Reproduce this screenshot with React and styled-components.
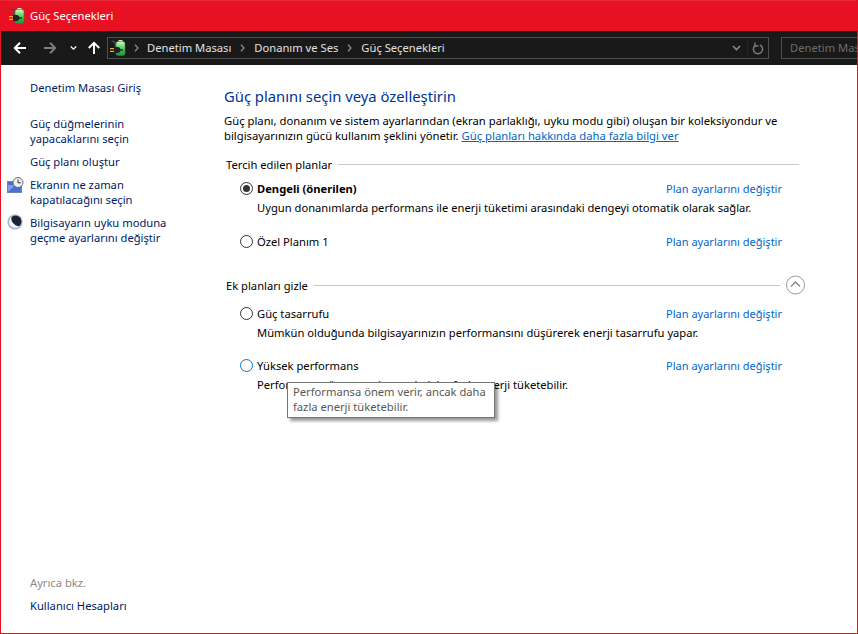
import React from "react";
import styled, { createGlobalStyle } from "styled-components";

const FONT = `"Noto Sans", "Open Sans", "Liberation Sans", sans-serif`;

const Global = createGlobalStyle`
  html, body { margin: 0; padding: 0; background: #fff; }
  body { font-family: ${FONT}; font-size: 11.2px; overflow: hidden; }
  * { box-sizing: border-box; }
`;

const Window = styled.div`
  width: 858px; height: 634px; display: flex; flex-direction: column;
  border-left: 1px solid #e81123; border-bottom: 1px solid #e81123; border-right: 1px solid #e81123;
  background: #fff; position: relative; overflow: hidden;
`;
const TitleBar = styled.div`
  height: 31px; flex: none; background: #e81123; color: #fff; display: flex; align-items: center;
  gap: 5px; padding-left: 8px; border-top: 1px solid #ea2a3a;
`;
const TitleText = styled.span`margin-top: -2px;`;
const Toolbar = styled.div`
  height: 34px; flex: none; background: #191919; display: flex; align-items: center; padding-left: 11px;
`;
const NavBtn = styled.span`
  display: flex; width: ${p => p.$w}px; margin-left: ${p => p.$ml ?? 0}px; justify-content: center; align-items: center; flex: none;
`;
const Address = styled.div`
  width: 662px; height: 22px; border: 1px solid #4f4f4f; display: flex; align-items: center;
  padding-left: 2px; color: #e2e2e2; flex: none;
`;
const Crumb = styled.span`white-space: nowrap; margin-top: -2px;`;
const Sep = styled.span`display: flex; width: ${p => p.$w ?? 23}px; justify-content: center; flex: none;`;
const AddrEnd = styled.div`margin-left: auto; display: flex; height: 100%; align-items: center;`;
const RefreshCell = styled.span`
  width: 21px; height: 100%; border-left: 1px solid #222; display: flex; align-items: center; justify-content: center;
`;
const ChevronCell = styled.span`width: 21px; display: flex; justify-content: center;`;
const Search = styled.div`
  margin-left: 12px; flex: 1; min-width: 0; height: 22px; border: 1px solid #4f4f4f; border-right: none; color: #6d6d6d;
  padding: 0 0 2px 8px; display: flex; align-items: center; overflow: hidden; white-space: nowrap;
`;
const Body = styled.div`flex: 1; display: flex; min-height: 0; color: #000;`;
const Sidebar = styled.nav`
  width: 223px; flex: none; display: flex; flex-direction: column; padding: 15px 0 20px 29px; position: relative;
`;
const SideLink = styled.div`
  line-height: 15px; color: #001a68; margin-bottom: ${p => p.$mb ?? 8}px; white-space: pre-line; position: relative;
`;
const SideIcon = styled.span`position: absolute; left: -24px; top: ${p => p.$top ?? 0}px; display: flex;`;
const SeeAlso = styled.div`margin-top: auto; color: #8a8a8a; line-height: 15px; margin-bottom: 8px;`;
const Content = styled.main`flex: 1; padding-top: 21px; min-width: 0;`;
const Heading = styled.h1`
  margin: 0; font-size: 14.8px; font-weight: 400; color: #003399; line-height: 20px;
`;
const Intro = styled.p`margin: 7px 0 0; line-height: 15px; white-space: nowrap; font-size: 11.27px;`;
const Link = styled.a`color: #0066cc; text-decoration: ${p => p.$u ? "underline" : "none"}; white-space: nowrap;`;
const SectionHead = styled.div`
  display: flex; align-items: center; padding-left: 2px; height: 20px; width: ${p => p.$w}px;
  margin-top: ${p => p.$mt}px; gap: 6px; white-space: nowrap;
`;
const Rule = styled.span`height: 1px; background: #c8c8c8; flex: 1;`;
const Collapse = styled.span`display: flex; flex: none;`;
const Plan = styled.div`margin-top: ${p => p.$mt}px; padding-left: 16px; width: 558px;`;
const PlanRow = styled.div`display: flex; align-items: center; height: 16px;`;
const Radio = styled.span`
  width: 13px; height: 13px; border-radius: 50%; flex: none; border: 1px solid ${p => p.$hover ? "#0078d7" : "#333"};
  display: flex; align-items: center; justify-content: center; background: #fff;
  &::after { content: ""; width: 7px; height: 7px; border-radius: 50%; background: ${p => p.$on ? "#333" : "transparent"}; }
`;
const PlanName = styled.span`margin-left: 4px; font-weight: ${p => p.$b ? 700 : 400}; white-space: nowrap;`;
const PlanLink = styled(Link)`margin-left: auto; font-size: 11px;`;
const PlanDesc = styled.div`margin: 4px 0 0 17px; line-height: 15px; white-space: nowrap;`;
const Tooltip = styled.div`
  position: absolute; left: 286px; top: 382px; width: 208px; height: 36px; background: #fff; border: 1px solid #767676;
  box-shadow: 3px 3px 3px rgba(0,0,0,.4); color: #575757; padding: 1px 5px; line-height: 15px; z-index: 5;
`;

const PowerIcon = ({ id }) => (
  <svg width="16" height="16" viewBox="0 0 16 16">
    <defs>
      <linearGradient id={id} x1="0" y1="0" x2="0" y2="1">
        <stop offset="0" stopColor="#d8f5d0" />
        <stop offset=".3" stopColor="#7fe07a" />
        <stop offset=".65" stopColor="#2fc04a" />
        <stop offset="1" stopColor="#129a35" />
      </linearGradient>
    </defs>
    <path d="M1.5 1.5C3 .8 5 1.5 5.5 4L5.5 8" stroke="#4a4a4a" strokeWidth="1.6" fill="none" />
    <rect x="8.5" y="0" width="4" height="2" fill="#cfe9cc" />
    <rect x="6" y="1.5" width="9" height="14" rx="2" fill={`url(#${id})`} stroke="#3c7a45" strokeWidth=".6" />
    <path d="M4 7H7.5A3.2 3.2 0 0 1 10.5 10A3.2 3.2 0 0 1 7.5 13H4Z" fill="#222" />
    <rect x="0" y="8" width="4" height="1.2" fill="#f0b429" />
    <rect x="0" y="10.8" width="4" height="1.2" fill="#f0b429" />
    <rect x="10" y="9.2" width="3" height="1.6" fill="#333" />
  </svg>
);
const ClockIcon = () => (
  <svg width="18" height="17" viewBox="0 0 18 17">
    <rect x="1.5" y="4.5" width="14" height="11" fill="#4a70d0" stroke="#6e83b5" />
    <path d="M2 15L9 8H2Z" fill="#7f9fe6" />
    <circle cx="12" cy="5.5" r="5" fill="#eef0f3" stroke="#6a6a6a" />
    <path d="M12 2.5V5.8H14.8" stroke="#333" fill="none" />
  </svg>
);
const MoonIcon = () => (
  <svg width="17" height="16" viewBox="0 0 17 16">
    <defs>
      <radialGradient id="halo" cx=".5" cy=".5" r=".55">
        <stop offset=".7" stopColor="#8fa6c8" />
        <stop offset="1" stopColor="#dfe7f2" />
      </radialGradient>
    </defs>
    <circle cx="9" cy="8" r="7.8" fill="url(#halo)" />
    <circle cx="9.6" cy="7.4" r="5.8" fill="#1f2330" />
    <path d="M5.5 2.5C4.5 7 7.5 11.5 13.5 12.6C10.5 15 5.5 14 3.5 10.5C2.5 8 3.5 4 5.5 2.5Z" fill="#f2f5fa" />
  </svg>
);
const Arrow = ({ dir = "left", color = "#fff" }) => {
  const r = { left: 0, right: 180, up: 90 }[dir];
  return (
    <svg width="14" height="14" viewBox="0 0 14 14" style={{ transform: `rotate(${r}deg)` }}>
      <path d="M13 7H2M7 1.8L1.8 7L7 12.2" stroke={color} strokeWidth="2" fill="none" />
    </svg>
  );
};
const Chevron = ({ color, w = 9, sw = 1.6 }) => (
  <svg width={w} height="6" viewBox="0 0 9 6"><path d="M1 1L4.5 4.5L8 1" stroke={color} strokeWidth={sw} fill="none" /></svg>
);
const SepIcon = () => (
  <svg width="5" height="8" viewBox="0 0 5 8"><path d="M1 .8L4 4L1 7.2" stroke="#8a8a8a" strokeWidth="1.3" fill="none" /></svg>
);
const Refresh = () => (
  <svg width="12" height="13" viewBox="0 0 12 13">
    <path d="M3.6 3.2A4.6 4.6 0 1 0 8 3" stroke="#7a7a7a" strokeWidth="1.5" fill="none" />
    <path d="M3 0.5V4H6.5" stroke="#7a7a7a" strokeWidth="1.3" fill="none" />
  </svg>
);
const UpCircle = () => (
  <svg width="19" height="20" viewBox="0 0 19 20">
    <circle cx="9.5" cy="10" r="9" fill="#fff" stroke="#9a9a9a" />
    <path d="M5 11.5L9.5 7L14 11.5" stroke="#8a8a8a" strokeWidth="1.5" fill="none" />
  </svg>
);

const PLAN_LINK = "Plan ayarlarını değiştir";

export default function App() {
  return (
    <>
      <Global />
      <Window>
        <TitleBar><PowerIcon id="pw1" /><TitleText>Güç Seçenekleri</TitleText></TitleBar>
        <Toolbar>
          <NavBtn $w={16}><Arrow /></NavBtn>
          <NavBtn $w={30} $ml={7}><Arrow dir="right" color="#7d7d7d" /></NavBtn>
          <NavBtn $w={16}><Chevron color="#fff" w={7} /></NavBtn>
          <NavBtn $w={26}><Arrow dir="up" /></NavBtn>
          <Address>
            <PowerIcon id="pw2" />
            <Sep $w={21}><SepIcon /></Sep>
            <Crumb>Denetim Masası</Crumb>
            <Sep><SepIcon /></Sep>
            <Crumb>Donanım ve Ses</Crumb>
            <Sep><SepIcon /></Sep>
            <Crumb>Güç Seçenekleri</Crumb>
            <AddrEnd>
              <ChevronCell><Chevron color="#8a8a8a" /></ChevronCell>
              <RefreshCell><Refresh /></RefreshCell>
            </AddrEnd>
          </Address>
          <Search>Denetim Masası</Search>
        </Toolbar>
        <Body>
          <Sidebar>
            <SideLink $mb={21}>Denetim Masası Giriş</SideLink>
            <SideLink>{"Güç düğmelerinin\nyapacaklarını seçin"}</SideLink>
            <SideLink>Güç planı oluştur</SideLink>
            <SideLink>
              <SideIcon $top={0}><ClockIcon /></SideIcon>
              {"Ekranın ne zaman\nkapatılacağını seçin"}
            </SideLink>
            <SideLink>
              <SideIcon $top={-1}><MoonIcon /></SideIcon>
              {"Bilgisayarın uyku moduna\ngeçme ayarlarını değiştir"}
            </SideLink>
            <SeeAlso>Ayrıca bkz.</SeeAlso>
            <SideLink $mb={0}>Kullanıcı Hesapları</SideLink>
          </Sidebar>
          <Content>
            <Heading>Güç planını seçin veya özelleştirin</Heading>
            <Intro>
              Güç planı, donanım ve sistem ayarlarından (ekran parlaklığı, uyku modu gibi) oluşan bir koleksiyondur ve<br />
              bilgisayarınızın gücü kullanım şeklini yönetir. <Link $u>Güç planları hakkında daha fazla bilgi ver</Link>
            </Intro>
            <SectionHead $mt={11} $w={575}>Tercih edilen planlar<Rule /></SectionHead>
            <Plan $mt={6}>
              <PlanRow><Radio $on /><PlanName $b>Dengeli (önerilen)</PlanName><PlanLink>{PLAN_LINK}</PlanLink></PlanRow>
              <PlanDesc>Uygun donanımlarda performans ile enerji tüketimi arasındaki dengeyi otomatik olarak sağlar.</PlanDesc>
            </Plan>
            <Plan $mt={18}>
              <PlanRow><Radio /><PlanName>Özel Planım 1</PlanName><PlanLink>{PLAN_LINK}</PlanLink></PlanRow>
            </Plan>
            <SectionHead $mt={26} $w={581}>
              Ek planları gizle<Rule /><Collapse><UpCircle /></Collapse>
            </SectionHead>
            <Plan $mt={10}>
              <PlanRow><Radio /><PlanName>Güç tasarrufu</PlanName><PlanLink>{PLAN_LINK}</PlanLink></PlanRow>
              <PlanDesc>Mümkün olduğunda bilgisayarınızın performansını düşürerek enerji tasarrufu yapar.</PlanDesc>
            </Plan>
            <Plan $mt={17}>
              <PlanRow><Radio $hover /><PlanName>Yüksek performans</PlanName><PlanLink>{PLAN_LINK}</PlanLink></PlanRow>
              <PlanDesc>Performansa önem verir, ancak daha fazla enerji tüketebilir.</PlanDesc>
            </Plan>
          </Content>
        </Body>
        <Tooltip>Performansa önem verir, ancak daha<br />fazla enerji tüketebilir.</Tooltip>
      </Window>
    </>
  );
}
